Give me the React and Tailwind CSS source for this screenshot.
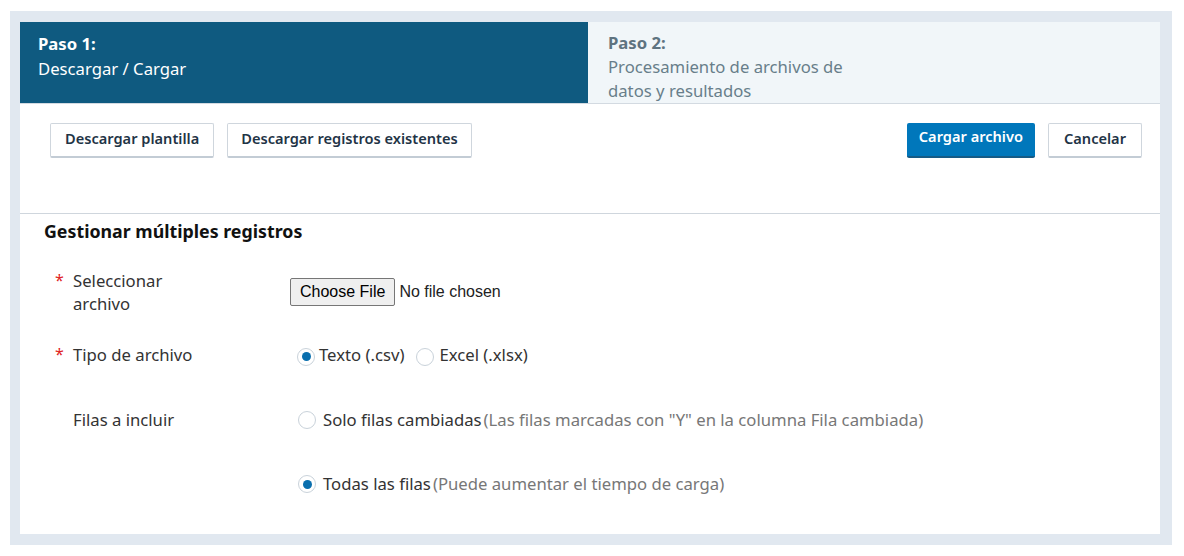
import { useState } from "react";

function Radio({ checked, onClick, className = "" }) {
  return (
    <span
      onClick={onClick}
      className={`flex h-[18px] w-[18px] shrink-0 items-center justify-center rounded-full border border-[#c9d2da] bg-white ${className}`}
    >
      {checked ? <span className="h-[9px] w-[9px] rounded-full bg-[#0a6fae]" /> : null}
    </span>
  );
}

function Label({ required, children }) {
  return (
    <div className="flex w-[246px] shrink-0 pl-[35px]">
      <span className="w-[18px] shrink-0 text-[16px] leading-[23px] text-[#e02424]">{required ? "*" : ""}</span>
      <span className="w-[130px] text-[16.7px] leading-[23px] text-[#333]">{children}</span>
    </div>
  );
}

function OutlineButton({ children, className = "px-[14px]" }) {
  return (
    <button
      type="button"
      className={`h-[35px] rounded-[2px] border border-[#cfd6dd] border-b-2 border-b-[#c3ccd5] bg-white pb-[3px] text-[14.6px] font-semibold text-[#1f3446] ${className}`}
    >
      {children}
    </button>
  );
}

export default function App() {
  const [fileType, setFileType] = useState("csv");
  const [rows, setRows] = useState("all");

  return (
    <div className="h-[556px] w-[1184px] bg-white pl-[10px] pt-[11px] font-['Noto_Sans',sans-serif]">
      <div className="h-[534px] w-[1162px] bg-[#e1e8f0] px-[10px] pt-[11px] pb-[11px]">
        <div className="h-[512px] w-[1140px] bg-white">
          {/* steps */}
          <div className="flex h-[82px] border-b border-[#d3dae1]">
            <div className="w-[568px] bg-[#0f5a80] pl-[18px] pt-[9px] text-[16.7px] leading-[25px] text-white">
              <div className="font-bold">Paso 1:</div>
              <div>Descargar / Cargar</div>
            </div>
            <div className="flex-1 overflow-hidden bg-[#f1f6f9] pl-[20px] pt-[9px] text-[16.7px] leading-[24px] text-[#687e8a]">
              <div className="font-bold text-[#5e7380]">Paso 2:</div>
              <div className="w-[250px]">Procesamiento de archivos de datos y resultados</div>
            </div>
          </div>

          {/* actions */}
          <div className="mt-[19px] flex items-start justify-between pl-[30px] pr-[18px]">
            <div className="flex gap-[13px]">
              <OutlineButton>Descargar plantilla</OutlineButton>
              <OutlineButton className="px-[13px]">Descargar registros existentes</OutlineButton>
            </div>
            <div className="flex gap-[13px]">
              <button
                type="button"
                className="h-[35px] rounded-[2px] border-b-2 border-b-[#155b86] bg-[#0077bb] px-[12px] pb-[5px] text-[14.6px] font-semibold text-white"
              >
                Cargar archivo
              </button>
              <OutlineButton className="px-[15px]">Cancelar</OutlineButton>
            </div>
          </div>

          <div className="mt-[55px] border-t border-[#cfd6dd]" />

          <div className="pl-[24px] pt-[5px] text-[17.8px] font-bold leading-[24px] text-[#111]">
            Gestionar múltiples registros
          </div>

          {/* form */}
          <div className="mt-[26px] flex">
            <Label required>Seleccionar archivo</Label>
            <div className="flex items-center pl-[24px]">
              <input type="file" className="font-['Liberation_Sans',Arial,sans-serif] text-[16px] text-[#222] file:mr-[4px] file:rounded-[2px] file:border file:border-[#767676] file:bg-[#efefef] file:px-[9px] file:py-[1px] file:text-[16px] file:text-black" />
            </div>
          </div>

          <div className="mt-[28px] flex">
            <Label required>Tipo de archivo</Label>
            <div className="flex items-center pl-[31px] text-[16.7px] leading-[23px] text-[#333]">
              <Radio checked={fileType === "csv"} onClick={() => setFileType("csv")} className="mt-[4px]" />
              <span className="ml-[4px]">Texto (.csv)</span>
              <Radio checked={fileType === "xlsx"} onClick={() => setFileType("xlsx")} className="ml-[12px] mt-[4px]" />
              <span className="ml-[5px]">Excel (.xlsx)</span>
            </div>
          </div>

          <div className="mt-[42px] flex">
            <Label>Filas a incluir</Label>
            <div className="flex items-center pl-[32px] text-[16.7px] leading-[23px]">
              <Radio checked={rows === "changed"} onClick={() => setRows("changed")} className="mt-[1px]" />
              <span className="ml-[7px] text-[#333]">Solo filas cambiadas</span>
              <span className="ml-[2px] text-[#777]">(Las filas marcadas con "Y" en la columna Fila cambiada)</span>
            </div>
          </div>

          <div className="mt-[41px] flex">
            <div className="w-[246px] shrink-0" />
            <div className="flex items-center pl-[32px] text-[16.7px] leading-[23px]">
              <Radio checked={rows === "all"} onClick={() => setRows("all")} className="mt-[1px]" />
              <span className="ml-[7px] text-[#333]">Todas las filas</span>
              <span className="ml-[2px] text-[#777]">(Puede aumentar el tiempo de carga)</span>
            </div>
          </div>
        </div>
      </div>
    </div>
  );
}
